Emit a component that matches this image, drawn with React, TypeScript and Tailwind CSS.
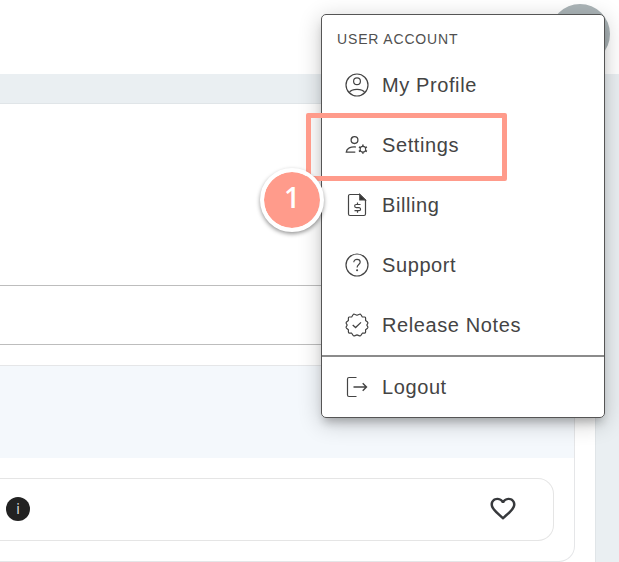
import React from "react";

type IconProps = { children: React.ReactNode };

function Icon({ children }: IconProps) {
  return (
    <svg
      width="24"
      height="24"
      viewBox="0 0 24 24"
      fill="none"
      stroke="#444"
      strokeWidth="1.2"
      className="shrink-0"
    >
      {children}
    </svg>
  );
}

function ProfileIcon() {
  return (
    <Icon>
      <circle cx="12" cy="12" r="11" />
      <circle cx="12" cy="8.3" r="3.4" />
      <path d="M4.200 19.800C5.300 17.600 8.400 16.400 12 16.400s6.700 1.200 7.800 3.400" />
    </Icon>
  );
}

function SettingsIcon() {
  return (
    <Icon>
      <circle cx="9.5" cy="7.100" r="3.400" strokeWidth="1.300" />
      <path d="M10.800 14C5.800 13.500 1.600 15.300 1.300 19.100H10.300" strokeWidth="1.300" />
      <circle cx="17.900" cy="16.200" r="2.800" strokeWidth="1.100" />
      <path
        d="M17.900 11.600v1.900M17.900 18.900v1.900M13.900 13.900l1.700 1M20.200 17.500l1.700 1M13.900 18.500l1.700-1M20.200 14.900l1.700-1"
        strokeWidth="1.500"
      />
    </Icon>
  );
}

function BillingIcon() {
  return (
    <Icon>
      <path d="M14.500 1.500H5A1.500 1.500 0 0 0 3.500 3v18A1.500 1.500 0 0 0 5 22.500h14a1.500 1.500 0 0 0 1.500-1.500V7.200Z" />
      <path d="M14.800 1.500v5.400h5.500Z" fill="#303030" />
      <path d="M15.500 11.500H11.200a1.550 1.550 0 0 0 0 3.100H14a1.550 1.550 0 0 1 0 3.100H9.500M12.500 9.500v2M12.500 17.700v2" />
    </Icon>
  );
}

function SupportIcon() {
  return (
    <Icon>
      <circle cx="12" cy="12" r="11" />
      <path d="M8.800 9.300c0-1.900 1.400-3 3.200-3s3.200 1.100 3.200 2.800c0 2.300-3.100 2.600-3.100 5.300" />
      <circle cx="12.100" cy="17.200" r=".45" fill="#444" />
    </Icon>
  );
}

function ReleaseIcon() {
  return (
    <Icon>
      <path
        d="M12 2.300L14.500 1.200Q15.500 .9 16 1.800L17.300 4L19.700 4Q20.700 4.200 20.600 5.200L20.600 7.500L22.500 9Q23.200 9.800 22.700 10.600L21.800 12L22.700 13.600Q23.200 14.500 22.500 15.200L20.600 16.700L20.600 19Q20.600 20 19.600 20.100L17.300 20.200L16 22.300Q15.500 23.200 14.500 22.900L12 21.900L9.500 22.900Q8.500 23.200 8 22.300L6.700 20.200L4.400 20.100Q3.400 20 3.400 19L3.400 16.700L1.500 15.200Q.8 14.500 1.300 13.600L2.200 12L1.300 10.600Q.8 9.800 1.500 9L3.400 7.500L3.400 5.200Q3.300 4.200 4.300 4L6.700 4L8 1.800Q8.500 .9 9.500 1.200Z"
        strokeLinejoin="round"
      />
      <path d="m7.700 12 2.900 2.500 5.400-5.100" strokeWidth="1.300" />
    </Icon>
  );
}

function LogoutIcon() {
  return (
    <Icon>
      <path d="M11.500 2.500H4A1.500 1.500 0 0 0 2.500 4v16A1.500 1.500 0 0 0 4 21.500h7.500" />
      <path d="M8.500 12H21.500M17.700 8.200l3.800 3.800-3.800 3.800" strokeWidth="1.400" />
    </Icon>
  );
}

const items = [
  { label: "My Profile", icon: <ProfileIcon /> },
  { label: "Settings", icon: <SettingsIcon /> },
  { label: "Billing", icon: <BillingIcon /> },
  { label: "Support", icon: <SupportIcon /> },
  { label: "Release Notes", icon: <ReleaseIcon /> },
];

function MenuItem({ label, icon }: { label: string; icon: React.ReactNode }) {
  return (
    <li className="flex h-[60px] items-center gap-[13px] pl-[23px] text-[20px] leading-6 tracking-[0.6px] text-[#444]">
      {icon}
      <span>{label}</span>
    </li>
  );
}

function AccountMenu() {
  return (
    <div className="absolute top-[14px] left-[321px] h-[404px] w-[284px] overflow-hidden rounded-[5px] border border-[#555] bg-white">
      <div className="flex h-10 items-center pt-[9px] pl-[15px] text-[14px] tracking-[0.85px] text-[#505050]">
        USER ACCOUNT
      </div>
      <ul>
        {items.map((item) => (
          <MenuItem key={item.label} label={item.label} icon={item.icon} />
        ))}
      </ul>
      <ul className="border-t-2 border-[#8b8b8b]">
        <MenuItem label="Logout" icon={<LogoutIcon />} />
      </ul>
    </div>
  );
}

export default function App() {
  return (
    <div className="relative flex h-[562px] w-[619px] flex-col overflow-hidden bg-[#eaeff2] font-['Liberation_Sans',Arial,sans-serif]">
      <header className="flex h-[74px] shrink-0 justify-end bg-white pt-1 pr-[9px]">
        <div className="size-[60px] rounded-full bg-[#abb4b7]" />
      </header>

      <main className="mt-[29px] mr-[23px] flex grow flex-col border-t border-r border-[#e0e5e8] bg-white">
        <div className="mt-[181px] h-[60px] shrink-0 border-y border-[#bdbdbd]" />
        <section className="mt-5 mr-5 h-[197px] shrink-0 overflow-hidden rounded-r-[16px] border border-l-0 border-[#e5e6e8]">
          <div className="h-[92px] bg-[#f4f8fc]" />
          <div className="mt-5 mr-5 flex h-[63px] items-center justify-between rounded-r-[16px] border border-l-0 border-[#e5e5e5] pr-[35px] pb-[2px] pl-[6px]">
            <span className="flex size-6 items-center justify-center rounded-full bg-[#222] font-['Noto_Sans',sans-serif] text-[14px] leading-6 text-[#ddd]">
              i
            </span>
            <svg width="30" height="29" viewBox="0 0 24 24" preserveAspectRatio="none" fill="#37393c">
              <path d="M16.500 3c-1.740 0-3.410.81-4.500 2.090C10.910 3.810 9.240 3 7.500 3 4.420 3 2 5.420 2 8.500c0 3.780 3.400 6.860 8.550 11.540L12 21.350l1.450-1.320C18.600 15.360 22 12.280 22 8.500 22 5.420 19.580 3 16.500 3zm-4.400 15.550-.1.100-.1-.1C7.140 14.240 4 11.390 4 8.500 4 6.500 5.500 5 7.500 5c1.540 0 3.040.99 3.570 2.360h1.870C13.460 5.990 14.960 5 16.500 5c2 0 3.500 1.500 3.500 3.500 0 2.890-3.140 5.740-7.900 10.050z" />
            </svg>
          </div>
        </section>
      </main>

      <div className="absolute top-[14px] left-[321px] h-[404px] w-[284px] rounded-[5px] shadow-[0_7px_8px_-3px_rgba(0,0,0,0.22),0_5px_22px_1px_rgba(0,0,0,0.2)]" />
      <AccountMenu />

      <div className="absolute top-[113px] left-[306px] h-[68px] w-[201px] rounded-[2px] border-[5px] border-[#ff9b8b]" />
      <div className="absolute top-[168px] left-[260px] flex size-[64px] items-center justify-center rounded-full border-4 border-white bg-[#ff9b8b] bg-clip-padding pb-[6px] font-['Open_Sans',sans-serif] text-[28px] font-semibold text-white shadow-[0_2px_4px_rgba(0,0,0,0.42)]">
        1
      </div>
    </div>
  );
}
